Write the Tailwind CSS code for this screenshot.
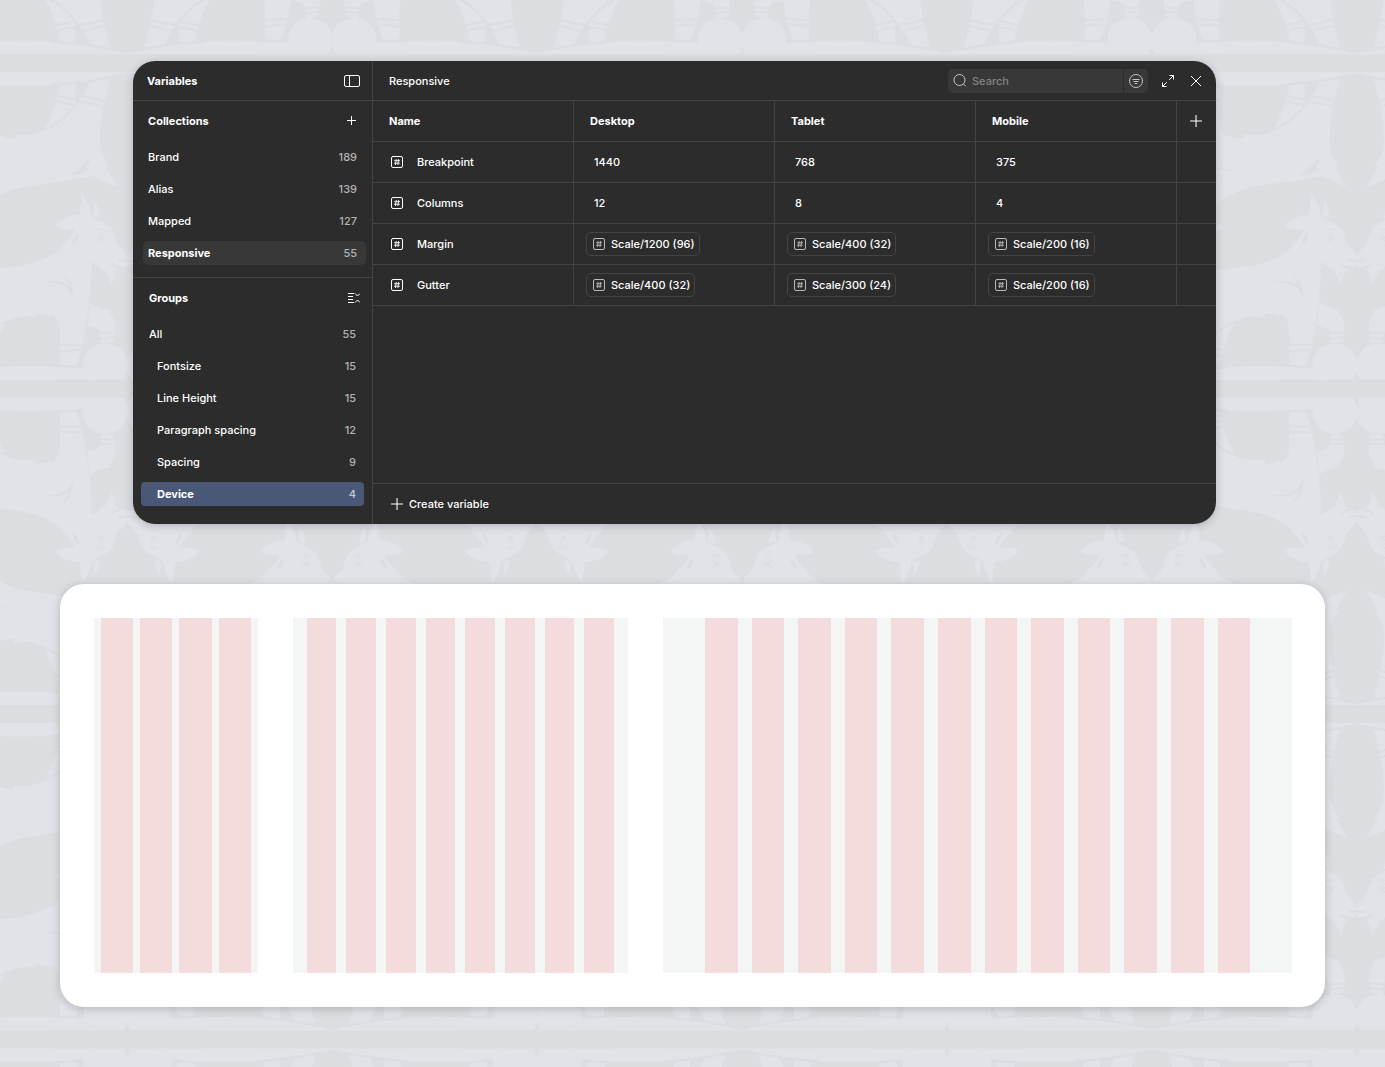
<!DOCTYPE html>
<html lang="en">
<head>
  <meta charset="UTF-8" />
  <meta name="viewport" content="width=device-width, initial-scale=1.0" />
  <title>Responsive | Variables</title>
  <script src="https://cdn.jsdelivr.net/npm/@tailwindcss/browser@4"></script>
</head>
<body class="relative min-h-screen bg-[#dbdde1] font-['Inter',sans-serif] text-[11px] leading-4 font-medium text-white antialiased">

  <!-- Goat pattern -->
  <svg class="absolute inset-0 -z-10 size-full" aria-hidden="true">
    <defs>
      <g id="goat">
        <g fill="#e1e3e8">
          <!-- front half -->
          <g transform="translate(77.6 -13.4) scale(.33333 .34435)">
            <path d="M-2 636C90 630 150 612 190 570L183 571C205 555 217 542 224 521C200 523 170 520 168 510C185 488 215 482 240 479C240 455 248 440 244 415C265 440 272 465 275 483L305 498C318 505 330 515 342 524L336 523C350 545 343 553 356 568C368 582 380 588 382 606C382 625 380 634 362 634L348 643L346 652L343 648C342 662 340 672 334 684C330 672 329 664 318 652L318 638L314 644C300 632 290 624 275 615C272 700 262 840 228 918L180 914C178 850 188 800 165 775C150 762 120 765 103 767L110 775C60 766 30 783-2 796Z" />
            <path d="M282 438C296 455 300 475 300 489L278 480C284 465 283 450 282 438Z" />
            <path d="M270 735C290 747 310 752 330 755L334 759L327 761C350 785 347 815 341 848L304 853C303 830 307 803 262 803Z" />
            <path d="M-2 957V921Q100 914 249 926L290 957Z" />
            <path d="M260 957C230 900 265 853 316 853C367 853 402 900 372 957Z" />
          </g>
          <!-- rear half -->
          <g transform="translate(127.3 338.8) scale(-.33333 -.34435)">
            <path d="M-2 65H384C330 80 200 104-2 103Z" />
            <path d="M270 94L331 84C312 150 300 200 300 270C302 305 318 325 328 341L317 339L352 397C315 385 300 376 277 366C200 385 120 385 60 400C30 408 15 415-2 425V249C20 258 35 258 50 256L42 246C80 252 110 246 139 234C185 215 235 170 270 94Z" />
            <path d="M180 104L226 99V158C200 190 165 214 134 230C155 190 170 150 180 104Z" />
          </g>
        </g>
        <!-- markings -->
        <g fill="#dbdde1" transform="translate(77.6 -13.4) scale(.33333 .34435)">
          <path d="M128 675C165 665 190 675 208 688C206 672 195 662 185 650C210 665 222 690 219 717C205 685 180 672 128 675Z" />
          <path d="M235 530C238 545 230 560 217 565C218 552 225 540 235 530Z" />
          <path d="M284 524Q305 516 322 526Q303 521 284 524ZM286 540Q305 546 322 541L305 550L316 549L290 561L303 547Q292 545 286 540Z" />
          <path d="M353 603Q362 614 384 609V614Q356 620 353 603ZM334 617Q350 632 378 630Q350 641 338 625L333 626Z" />
          <g fill="none" stroke="#dbdde1" stroke-width="5">
            <path d="M180 859L243 856M178 876L240 872M302 824L348 822M300 838L346 835" />
            <circle cx="306" cy="533" r="6" stroke-width="2" />
          </g>
        </g>
        <g fill="#dbdde1" transform="translate(127.3 338.8) scale(-.33333 -.34435)">
          <path d="M203 366C235 355 250 330 273 311C268 325 262 335 259 343L270 346C245 362 225 364 203 366Z" />
          <path d="M172 133Q200 142 228 144M168 148Q195 156 224 161M248 135Q280 136 315 150M240 151Q275 154 312 165" fill="none" stroke="#dbdde1" stroke-width="5" />
        </g>
      </g>
      <g id="pair">
        <use href="#goat" />
        <use href="#goat" transform="rotate(180 102.45 162.7)" />
      </g>
      <g id="row">
        <use href="#pair" />
        <use href="#pair" transform="translate(409.8 0) scale(-1 1)" />
      </g>
      <pattern id="goats" x="-77.6" y="63.2" width="409.8" height="650.8" patternUnits="userSpaceOnUse">
        <use href="#row" />
        <use href="#row" transform="translate(0 650.8) scale(1 -1)" />
      </pattern>

      <!-- Shared icons -->
      <symbol id="number" viewBox="0 0 12 12" fill="none" stroke="currentColor">
        <rect x=".5" y=".5" width="11" height="11" rx="1.5" />
        <path d="M5.2 3L4.5 9M7.6 3L6.9 9M3.2 4.7H9M3 7.2H8.8" stroke-width=".9" />
      </symbol>
      <symbol id="plus" viewBox="0 0 12 12" fill="none" stroke="currentColor">
        <path d="M6.5 0V11M1 5.5H12" />
      </symbol>
    </defs>
    <rect width="100%" height="100%" fill="url(#goats)" />
  </svg>

  <main class="px-[60px] pt-[61px] pb-[60px]">

    <!-- Variables panel -->
    <section class="mr-[109px] ml-[73px] flex overflow-hidden rounded-[22px] bg-[#2c2c2c] shadow-[0_2px_10px_rgba(0,0,0,0.2)]">

      <aside class="w-60 shrink-0 border-r border-[#444]">
        <div class="flex h-10 items-center justify-between border-b border-[#444] pr-3 pl-[14px]">
          <h1 class="font-bold">Variables</h1>
          <button type="button" aria-label="Toggle sidebar">
            <svg class="h-3 w-4" viewBox="0 0 16 12" fill="none" stroke="currentColor">
              <rect x=".5" y=".5" width="15" height="11" rx="1.5" />
              <path d="M5.5 .5V11.5" />
            </svg>
          </button>
        </div>

        <div class="border-b border-[#444] pb-3">
          <div class="flex h-10 items-center justify-between px-[15px]">
            <h2 class="font-bold">Collections</h2>
            <button type="button" aria-label="Add collection">
              <svg class="size-3" viewBox="0 0 12 12" fill="none" stroke="currentColor"><path d="M6.5 1V10M2 5.5H11" /></svg>
            </button>
          </div>
          <ul class="mt-1 mr-[6px] ml-[10px] flex flex-col gap-2">
            <li><button type="button" class="flex h-6 w-full items-center justify-between pr-[9px] pl-[5px]">Brand <span class="font-medium text-[#b4b4b4]">189</span></button></li>
            <li><button type="button" class="flex h-6 w-full items-center justify-between pr-[9px] pl-[5px]">Alias <span class="font-medium text-[#b4b4b4]">139</span></button></li>
            <li><button type="button" class="flex h-6 w-full items-center justify-between pr-[9px] pl-[5px]">Mapped <span class="font-medium text-[#b4b4b4]">127</span></button></li>
            <li><button type="button" class="flex h-6 w-full items-center justify-between rounded-[5px] bg-[#383838] pr-[9px] pl-[5px] font-bold">Responsive <span class="font-medium text-[#b4b4b4]">55</span></button></li>
          </ul>
        </div>

        <div class="pb-[18px]">
          <div class="flex h-10 items-center justify-between pr-3 pl-4">
            <h2 class="font-bold">Groups</h2>
            <button type="button" aria-label="Collapse all groups">
              <svg class="h-3 w-[13px]" viewBox="0 0 13 12" fill="none" stroke="currentColor">
                <path d="M1 1.5H7M1 4.5H6M1 7.5H6M1 10.5H7" />
                <path d="M8 1.5L10.5 4L13 1.5M8 10.5L10.5 8L13 10.5" />
              </svg>
            </button>
          </div>
          <ul class="mx-2 mt-1 flex flex-col gap-2">
            <li><button type="button" class="flex h-6 w-full items-center justify-between px-2">All <span class="font-medium text-[#b4b4b4]">55</span></button></li>
            <li><button type="button" class="flex h-6 w-full items-center justify-between pr-2 pl-4">Fontsize <span class="font-medium text-[#b4b4b4]">15</span></button></li>
            <li><button type="button" class="flex h-6 w-full items-center justify-between pr-2 pl-4">Line Height <span class="font-medium text-[#b4b4b4]">15</span></button></li>
            <li><button type="button" class="flex h-6 w-full items-center justify-between pr-2 pl-4">Paragraph spacing <span class="font-medium text-[#b4b4b4]">12</span></button></li>
            <li><button type="button" class="flex h-6 w-full items-center justify-between pr-2 pl-4">Spacing <span class="font-medium text-[#b4b4b4]">9</span></button></li>
            <li><button type="button" class="flex h-6 w-full items-center justify-between rounded bg-[#4a5878] pr-2 pl-4 font-bold">Device <span class="font-medium text-[#c5cad6]">4</span></button></li>
          </ul>
        </div>
      </aside>

      <div class="flex min-w-0 flex-1 flex-col">
        <header class="flex h-10 items-center border-b border-[#444] pr-[14px] pl-4">
          <h2>Responsive</h2>
          <div class="ml-auto flex h-6 w-[200px] overflow-hidden rounded-[5px]">
            <label class="flex min-w-0 flex-1 items-center gap-1 bg-[#383838] pl-[5px]">
              <svg class="size-[15px] shrink-0 text-[#c4c4c4]" viewBox="0 0 15 15" fill="none" stroke="currentColor">
                <circle cx="6.5" cy="7" r="5.5" />
                <path d="M10.5 11L12.8 13.3" />
              </svg>
              <input type="text" aria-label="Search" placeholder="Search" class="w-full min-w-0 bg-transparent font-medium outline-none placeholder:text-[#848484]" />
            </label>
            <button type="button" aria-label="Filter" class="ml-px flex w-6 items-center justify-center bg-[#383838] text-[#c4c4c4]">
              <svg class="size-[14px]" viewBox="0 0 14 14" fill="none" stroke="currentColor">
                <circle cx="7" cy="7" r="6.5" />
                <path d="M3.5 5.5H10.5M4.5 7.5H9.5M5.5 9.5H8.5" />
              </svg>
            </button>
          </div>
          <button type="button" aria-label="Expand" class="ml-[14px]">
            <svg class="size-3" viewBox="0 0 12 12" fill="none" stroke="currentColor">
              <path d="M7.5 .5H11.5V4.5M11.5 .5L7.2 4.8M4.5 11.5H.5V7.5M.5 11.5L4.8 7.2" />
            </svg>
          </button>
          <button type="button" aria-label="Close" class="ml-4">
            <svg class="size-3" viewBox="0 0 12 12" fill="none" stroke="currentColor"><path d="M1 1L11 11M11 1L1 11" /></svg>
          </button>
        </header>

        <table class="w-full table-fixed border-separate border-spacing-0 text-left [&_td]:h-[41px] [&_td]:border-b [&_td]:border-[#444] [&_td]:p-0 [&_th]:h-[41px] [&_th]:border-b [&_th]:border-[#444] [&_th]:p-0 [&_tr>*:not(:last-child)]:border-r">
          <colgroup><col /><col /><col /><col /><col class="w-[39px]" /></colgroup>
          <thead>
            <tr>
              <th><div class="pl-4 font-bold">Name</div></th>
              <th><div class="pl-4 font-bold">Desktop</div></th>
              <th><div class="pl-4 font-bold">Tablet</div></th>
              <th><div class="pl-4 font-bold">Mobile</div></th>
              <th>
                <button type="button" aria-label="Add mode" class="ml-3 block">
                  <svg class="size-[13px]"><use href="#plus" /></svg>
                </button>
              </th>
            </tr>
          </thead>
          <tbody>
            <tr>
              <td><div class="flex items-center gap-[14px] pl-[18px]"><svg class="size-3"><use href="#number" /></svg>Breakpoint</div></td>
              <td><div class="pl-5">1440</div></td>
              <td><div class="pl-5">768</div></td>
              <td><div class="pl-5">375</div></td>
              <td></td>
            </tr>
            <tr>
              <td><div class="flex items-center gap-[14px] pl-[18px]"><svg class="size-3"><use href="#number" /></svg>Columns</div></td>
              <td><div class="pl-5">12</div></td>
              <td><div class="pl-5">8</div></td>
              <td><div class="pl-5">4</div></td>
              <td></td>
            </tr>
            <tr>
              <td><div class="flex items-center gap-[14px] pl-[18px]"><svg class="size-3"><use href="#number" /></svg>Margin</div></td>
              <td><div class="ml-3 flex h-6 w-fit items-center gap-[6px] rounded-[5px] border border-[#444] pr-1 pl-[6px]"><svg class="size-3 text-[#b8b8b8]"><use href="#number" /></svg>Scale/1200 (96)</div></td>
              <td><div class="ml-3 flex h-6 w-fit items-center gap-[6px] rounded-[5px] border border-[#444] pr-1 pl-[6px]"><svg class="size-3 text-[#b8b8b8]"><use href="#number" /></svg>Scale/400 (32)</div></td>
              <td><div class="ml-3 flex h-6 w-fit items-center gap-[6px] rounded-[5px] border border-[#444] pr-1 pl-[6px]"><svg class="size-3 text-[#b8b8b8]"><use href="#number" /></svg>Scale/200 (16)</div></td>
              <td></td>
            </tr>
            <tr>
              <td><div class="flex items-center gap-[14px] pl-[18px]"><svg class="size-3"><use href="#number" /></svg>Gutter</div></td>
              <td><div class="ml-3 flex h-6 w-fit items-center gap-[6px] rounded-[5px] border border-[#444] pr-1 pl-[6px]"><svg class="size-3 text-[#b8b8b8]"><use href="#number" /></svg>Scale/400 (32)</div></td>
              <td><div class="ml-3 flex h-6 w-fit items-center gap-[6px] rounded-[5px] border border-[#444] pr-1 pl-[6px]"><svg class="size-3 text-[#b8b8b8]"><use href="#number" /></svg>Scale/300 (24)</div></td>
              <td><div class="ml-3 flex h-6 w-fit items-center gap-[6px] rounded-[5px] border border-[#444] pr-1 pl-[6px]"><svg class="size-3 text-[#b8b8b8]"><use href="#number" /></svg>Scale/200 (16)</div></td>
              <td></td>
            </tr>
          </tbody>
        </table>

        <footer class="mt-auto border-t border-[#444]">
          <button type="button" class="flex h-10 items-center gap-[6px] pl-[17px]">
            <svg class="size-[13px]"><use href="#plus" /></svg>
            Create variable
          </button>
        </footer>
      </div>
    </section>

    <!-- Layout grids: mobile, tablet, desktop -->
    <section class="mt-[60px] grid grid-cols-[375fr_768fr_1440fr] gap-[35px] rounded-3xl bg-white p-[34px] pr-[33px] shadow-[0_2px_10px_rgba(0,0,0,0.2)]">
      <div class="flex h-[355px] gap-[7px] bg-[#f4f6f6] px-[7px] [&>div]:flex-1 [&>div]:bg-[#f5dcdc]">
        <div></div><div></div><div></div><div></div>
      </div>
      <div class="flex h-[355px] gap-[10px] bg-[#f4f6f6] px-[14px] [&>div]:flex-1 [&>div]:bg-[#f5dcdc]">
        <div></div><div></div><div></div><div></div><div></div><div></div><div></div><div></div>
      </div>
      <div class="flex h-[355px] gap-[14px] bg-[#f4f6f6] px-[42px] [&>div]:flex-1 [&>div]:bg-[#f5dcdc]">
        <div></div><div></div><div></div><div></div><div></div><div></div>
        <div></div><div></div><div></div><div></div><div></div><div></div>
      </div>
    </section>
  </main>

</body>
</html>
